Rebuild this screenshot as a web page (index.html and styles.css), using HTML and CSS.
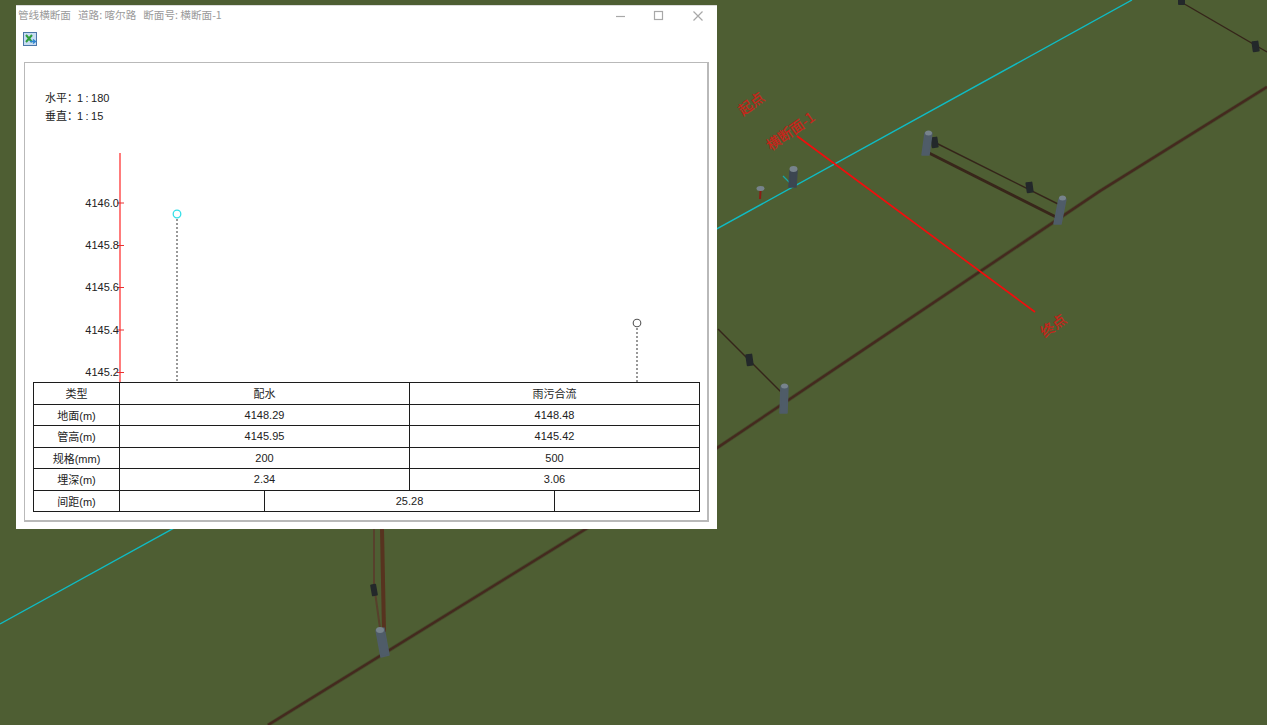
FILE: index.html
```html
<!DOCTYPE html>
<html lang="zh">
<head>
<meta charset="utf-8">
<title>管线横断面</title>
<link rel="stylesheet" href="styles.css">
</head>
<body>
<svg class="scene" viewBox="0 0 1267 725" width="1267" height="725" aria-hidden="true">
  <line class="cyan" x1="0" y1="624" x2="1132" y2="0"/>
  <line class="cyan-thin" x1="783" y1="176" x2="790" y2="183"/>

  <polyline class="pipe-edge" points="268,725 717,448 863,350 1100,191 1267,87"/>
  <polyline class="pipe" points="268,725 717,448 863,350 1100,191 1267,87"/>

  <line class="pipe-thick" x1="925" y1="151" x2="1056" y2="217"/>
  <line class="pipe-thin" x1="934" y1="142" x2="1058" y2="204"/>
  <line class="pipe-thin" x1="1181" y1="2" x2="1267" y2="52"/>
  <line class="pipe-thin" x1="718" y1="329" x2="781" y2="392"/>
  <line class="pipe-v" x1="382" y1="529" x2="384" y2="632"/>
  <line class="pipe-v-thin" x1="374" y1="529" x2="374" y2="586"/>
  <line class="pipe-v-thin" x1="375" y1="592" x2="380" y2="628"/>

  <g class="box">
    <rect x="931" y="137" width="7" height="11" rx="1" transform="rotate(-8 934 142)"/>
    <rect x="1026" y="182" width="7" height="11" rx="1" transform="rotate(-8 1029 187)"/>
    <rect x="1178" y="-3" width="7" height="8" rx="1"/>
    <rect x="1252" y="41" width="7" height="11" rx="1" transform="rotate(-8 1255 46)"/>
    <rect x="746" y="354" width="7" height="12" rx="1" transform="rotate(-8 749 360)"/>
    <rect x="371" y="584" width="6" height="12" rx="1" transform="rotate(-10 374 590)"/>
  </g>

  <g class="post">
    <path d="M925 133 L932 133 L929 155 L922 155 Z"/>
    <path d="M1059 199 L1066 199 L1061 224 L1054 224 Z"/>
    <path d="M781 386 L788 386 L787 413 L780 413 Z"/>
    <path d="M376 630 L384 628 L389 655 L381 657 Z"/>
  </g>
  <path class="post-dark" d="M790 171 L797 171 L796 187 L789 187 Z"/>
  <g class="cap">
    <ellipse cx="928.500" cy="133" rx="3.500" ry="2.500"/>
    <ellipse cx="1062.500" cy="198" rx="3.500" ry="2.500"/>
    <ellipse cx="784.500" cy="386" rx="3.500" ry="2.500"/>
    <ellipse cx="380" cy="630" rx="4" ry="3"/>
    <ellipse cx="793.500" cy="169" rx="4" ry="3"/>
    <ellipse cx="760.500" cy="188.500" rx="4" ry="2.500"/>
  </g>
  <line class="stem" x1="760.500" y1="191" x2="760" y2="199"/>

  <line class="section" x1="797" y1="136" x2="1035" y2="312"/>
  <text class="mark" transform="translate(743 116) rotate(-36)">起点</text>
  <text class="mark" transform="translate(771 151) rotate(-35)">横断面-1</text>
  <text class="mark" transform="translate(1045 338) rotate(-36)">终点</text>
</svg>

<main class="window">
  <header class="titlebar">
    <div class="title">
      <span>管线横断面</span>
      <span>道路: 喀尔路</span>
      <span>断面号: 横断面-1</span>
    </div>
    <div class="controls">
      <svg class="ctl" viewBox="0 0 12 12" width="12" height="12"><line x1="2" y1="6.500" x2="11" y2="6.500"/></svg>
      <svg class="ctl" viewBox="0 0 12 12" width="12" height="12"><rect x="1.500" y="1.500" width="8" height="8"/></svg>
      <svg class="ctl" viewBox="0 0 12 12" width="12" height="12"><path d="M1.500 1.500 L10.500 10.500 M10.500 1.500 L1.500 10.500"/></svg>
    </div>
  </header>
  <div class="toolbar">
    <svg class="excel" viewBox="0 0 14 14" width="14" height="14">
      <rect x="0.500" y="0.500" width="13" height="13" class="excel-bg"/>
      <path class="excel-x" d="M3 3 L9 10 M9 3 L3 10"/>
      <path class="excel-arrow" d="M7 9.500 H12 M10 7.500 L12.500 9.500 L10 11.500"/>
    </svg>
  </div>
  <section class="panel">
    <div class="scale">
      <div class="scale-row"><span class="scale-key">水平：</span><span class="scale-val">1 : 180</span></div>
      <div class="scale-row"><span class="scale-key">垂直：</span><span class="scale-val">1 : 15</span></div>
    </div>
    <svg class="plot" viewBox="25 131 682 251" width="682" height="251">
      <line class="axis" x1="120" y1="153" x2="120" y2="382"/>
      <g class="tick-lines">
        <line x1="117" y1="203" x2="124" y2="203"/>
        <line x1="117" y1="245.500" x2="124" y2="245.500"/>
        <line x1="117" y1="287.500" x2="124" y2="287.500"/>
        <line x1="117" y1="330" x2="124" y2="330"/>
        <line x1="117" y1="372.500" x2="124" y2="372.500"/>
      </g>
      <g class="tick-text">
        <text x="119" y="206.500">4146.0</text>
        <text x="119" y="249">4145.8</text>
        <text x="119" y="291">4145.6</text>
        <text x="119" y="333.500">4145.4</text>
        <text x="119" y="376">4145.2</text>
      </g>
      <line class="drop" x1="177" y1="219" x2="177" y2="382"/>
      <line class="drop" x1="637" y1="328" x2="637" y2="382"/>
      <circle class="node-cyan" cx="177" cy="214" r="3.800"/>
      <circle class="node-gray" cx="637" cy="323" r="3.800"/>
    </svg>
    <table class="data">
      <colgroup>
        <col class="c-head"><col class="c-half"><col class="c-half"><col class="c-half"><col class="c-half">
      </colgroup>
      <tr><th>类型</th><td colspan="2">配水</td><td colspan="2">雨污合流</td></tr>
      <tr><th>地面(m)</th><td colspan="2">4148.29</td><td colspan="2">4148.48</td></tr>
      <tr><th>管高(m)</th><td colspan="2">4145.95</td><td colspan="2">4145.42</td></tr>
      <tr><th>规格(mm)</th><td colspan="2">200</td><td colspan="2">500</td></tr>
      <tr><th>埋深(m)</th><td colspan="2">2.34</td><td colspan="2">3.06</td></tr>
      <tr><th>间距(m)</th><td></td><td colspan="2">25.28</td><td></td></tr>
    </table>
  </section>
</main>
</body>
</html>
```
FILE: styles.css
```css
html, body {
  margin: 0;
  padding: 0;
  height: 100%;
  overflow: hidden;
}
body {
  background: #4e5e33;
  font-family: "Liberation Sans", "Noto Sans CJK SC", sans-serif;
}
.scene {
  position: absolute;
  left: 0;
  top: 0;
  display: block;
}
.cyan { stroke: #0fbcc4; stroke-width: 1.4; }
.cyan-thin { stroke: #14a8a8; stroke-width: 1.2; }
.pipe-edge { fill: none; stroke: #474a2b; stroke-width: 3.8; }
.pipe { fill: none; stroke: #44291e; stroke-width: 2.2; }
.pipe-thick { stroke: #38261a; stroke-width: 3; }
.pipe-thin { stroke: #35251a; stroke-width: 1.4; }
.pipe-v { stroke: #57331f; stroke-width: 4; }
.pipe-v-thin { stroke: #57402c; stroke-width: 2; }
.box rect { fill: #23282a; }
.post path { fill: #4f5c68; stroke: #4f5c68; stroke-width: 1.5; stroke-linejoin: round; }
.post-dark { fill: #3c4651; stroke: #3c4651; stroke-width: 1.5; }
.cap ellipse { fill: #77838c; }
.stem { stroke: #8c1c14; stroke-width: 2; }
.section { stroke: #f20d0d; stroke-width: 1.7; }
.mark {
  fill: #c9231a;
  stroke: #c9231a;
  stroke-width: 0.25;
  font-size: 14px;
  font-family: "Noto Sans CJK SC", sans-serif;
}

.window {
  position: absolute;
  left: 16px;
  top: 5px;
  width: 701px;
  height: 524px;
  box-sizing: border-box;
  background: #fff;
  display: flex;
  flex-direction: column;
  border-top: 1px solid #dcdcdc;
}
.titlebar {
  height: 20px;
  padding-left: 2px;
  display: flex;
  align-items: center;
  justify-content: space-between;
}
.title {
  display: flex;
  gap: 7px;
  padding-bottom: 3px;
  font-size: 10.600px;
  color: #9a9a9a;
  font-family: "Noto Sans CJK SC", sans-serif;
}
.controls {
  display: flex;
  gap: 27px;
  padding-right: 13px;
}
.ctl { display: block; }
.ctl line, .ctl rect, .ctl path {
  fill: none;
  stroke: #a8a8a8;
  stroke-width: 1.200;
}
.toolbar {
  height: 36px;
  padding: 6px 0 0 7px;
  box-sizing: border-box;
}
.excel { display: block; }
.excel-bg { fill: #c7dcf2; stroke: #4c77a8; }
.excel-x { fill: none; stroke: #2f9e3c; stroke-width: 2; }
.excel-arrow { fill: none; stroke: #2f86d0; stroke-width: 1.3; }

.panel {
  margin-left: 8px;
  width: 685px;
  height: 460px;
  box-sizing: border-box;
  border: 1px solid #b9b9b9;
  border-right-width: 2px;
  border-bottom-width: 2px;
  background: #fff;
}
.scale {
  height: 68px;
  padding: 27px 0 0 20px;
  box-sizing: border-box;
  font-size: 11px;
  color: #222;
}
.scale-row {
  height: 17.500px;
  line-height: 17.500px;
  display: flex;
}
.scale-key {
  flex: none;
  width: 32px;
  margin-top: -1px;
  font-size: 11px;
  white-space: nowrap;
  overflow: hidden;
  font-family: "Noto Sans CJK SC", sans-serif;
}
.scale-val { word-spacing: -0.600px; }
.plot { display: block; }
.axis { stroke: #f44; stroke-width: 1.400; }
.tick-lines line { stroke: #e83030; stroke-width: 1; }
.tick-text text {
  font-size: 11px;
  fill: #222;
  text-anchor: end;
}
.drop { stroke: #555; stroke-width: 1.2; stroke-dasharray: 2 2; }
.node-cyan { fill: #fff; stroke: #35dfe8; stroke-width: 1.3; }
.node-gray { fill: #fff; stroke: #555; stroke-width: 1.1; }

.data {
  margin-left: 8px;
  width: 666px;
  height: 130px;
  border-collapse: collapse;
  table-layout: fixed;
  font-size: 11px;
  color: #222;
  text-align: center;
}
.data th, .data td {
  border: 1px solid #1c1c1c;
  padding: 0;
  font-weight: 400;
  font-family: "Liberation Sans", "Noto Sans CJK SC", sans-serif;
}
.c-head { width: 86px; }
.c-half { width: 145px; }
```
